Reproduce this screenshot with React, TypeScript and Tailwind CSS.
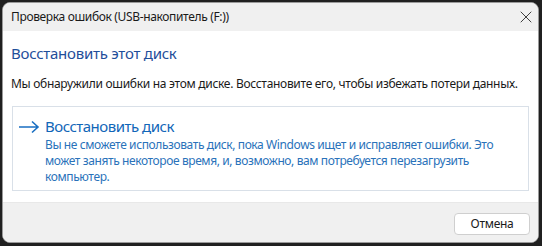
import { X } from "lucide-react";

const font = { fontFamily: '"Segoe UI", "Noto Sans", "Open Sans", sans-serif' };

export default function App() {
  return (
    <div className="w-[542px] h-[246px] bg-[#202020] pl-[2px] pt-[2px]" style={font}>
      <div className="w-[537px] h-[241px] rounded-[8px] overflow-hidden border border-[#9a9a9a] flex flex-col bg-white">
        {/* title bar */}
        <div className="h-[28px] shrink-0 bg-[#f0f0f0] flex items-center pl-[8px] pr-[2px]">
          <span className="text-[12px] tracking-[-0.35px] text-[#1a1a1a]">Проверка ошибок (USB-накопитель (F:))</span>
          <X className="ml-auto text-[#1a1a1a]" size={20} strokeWidth={1} />
        </div>

        {/* content */}
        <div className="flex-1 bg-white pl-[8px] pr-[8px] pt-[12px]">
          <h1 className="text-[15px] leading-[20px] tracking-[-0.25px] text-[#1f4e9a]">Восстановить этот диск</h1>
          <p className="mt-[13px] text-[12px] leading-[16px] tracking-[-0.3px] text-[#1a1a1a] whitespace-nowrap">
            Мы обнаружили ошибки на этом диске. Восстановите его, чтобы избежать потери данных.
          </p>
          <div className="mt-[14px] ml-[1px] mr-[1px] border border-[#d9e0e8] pl-[5px] pr-[10px] pt-[8px] pb-[5px] flex gap-[5px]">
            <svg width="22" height="14" viewBox="0 0 22 14" className="mt-[5px] shrink-0">
              <path d="M1 7h19M14 1.5l6 5.5-6 5.5" fill="none" stroke="#1a6fc2" strokeWidth="1.6" />
            </svg>
            <div className="flex flex-col">
              <span className="text-[15px] leading-[22px] tracking-[-0.5px] text-[#1166b8]">Восстановить диск</span>
              <span className="text-[12px] leading-[16px] tracking-[-0.4px] text-[#2a72ba]">
                Вы не сможете использовать диск, пока Windows ищет и исправляет ошибки. Это
                <br />
                может занять некоторое время, и, возможно, вам потребуется перезагрузить
                <br />
                компьютер.
              </span>
            </div>
          </div>
        </div>

        {/* footer */}
        <div className="h-[40px] shrink-0 bg-[#f0f0f0] border-t border-[#e8e8e8] flex items-start justify-end pr-[8px] pt-[10px]">
          <button className="w-[76px] h-[22px] bg-white border border-[#cfcfcf] rounded-[4px] text-[12px] tracking-[-0.3px] text-[#1a1a1a] leading-none">
            Отмена
          </button>
        </div>
      </div>
    </div>
  );
}
